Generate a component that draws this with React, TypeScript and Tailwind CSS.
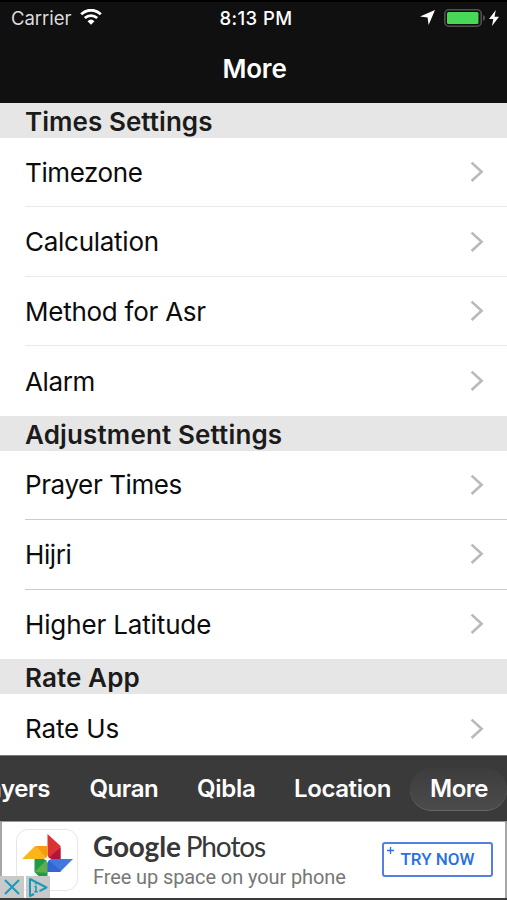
import React from "react";
import clsx from "clsx";

type Item = { label: string; text: string };

type SectionProps = {
  title: string;
  titleClass: string;
  divider: string;
  items: Item[];
};

const StatusBar: React.FC = () => {
  return (
    <div className="grid grid-cols-3 items-center h-9 pt-0.5 pl-[11px] pr-[8px] text-white">
      <div className="flex items-center gap-[9px]">
        <span className="text-[18.5px] tracking-[-0.05px] text-[#dddddd]">Carrier</span>
        <svg className="w-[22px] h-4 -mt-1" viewBox="0 0 22 16" fill="none">
          <path d="M1.2 5.2C6.8 -.1 15.2 -.1 20.8 5.2" stroke="#fff" strokeWidth="2.9" />
          <path d="M4.8 9C8.4 5.7 13.6 5.7 17.2 9" stroke="#fff" strokeWidth="2.8" />
          <path d="M11 15.7L7.5 12.2Q11 9 14.5 12.2Z" fill="#fff" />
        </svg>
      </div>
      <div className="pl-[2px] text-center text-[18.5px] font-medium tracking-[0.4px] whitespace-nowrap">
        8:13 PM
      </div>
      <div className="flex items-center justify-end -mt-[3px]">
        <svg className="w-[15px] h-[15px] mr-[9px]" viewBox="0 0 15 15">
          <path d="M15 0L8.6 15L7.6 7.5L0 6.5Z" fill="#fff" />
        </svg>
        <svg className="w-[42px] h-[18px] mr-[3px]" viewBox="0 0 42 18">
          <rect x=".8" y=".8" width="36.4" height="16.4" rx="4" fill="none" stroke="#505050" strokeWidth="1.6" />
          <rect x="3" y="3" width="31.5" height="12" rx="1.5" fill="#47d857" />
          <path d="M39 6Q41.2 7 41.2 9Q41.2 11 39 12Z" fill="#505050" />
        </svg>
        <svg className="w-[10px] h-4" viewBox="0 0 10 16">
          <path d="M6.8 0L0 9H4.3L3 16L10 6.8H5.5Z" fill="#fff" />
        </svg>
      </div>
    </div>
  );
};

const Section: React.FC<SectionProps> = (props) => {
  return (
    <section>
      <h2 className="flex items-center h-[34.75px] pt-[3px] pl-[25px] bg-[#e6e6e6] text-[26px] leading-none font-semibold text-[#1b1b1b]">
        <span className={props.titleClass}>{props.title}</span>
      </h2>
      <ul className="pl-[25px]">
        {props.items.map((item, i) => (
          <li
            key={item.label}
            className={clsx(
              "flex items-center justify-between h-[69.5px] pr-[23px]",
              i < props.items.length - 1 && "border-b",
              props.divider,
            )}
          >
            <span className={clsx("pt-px text-[26px] leading-none text-[#0c0c0c]", item.text)}>
              {item.label}
            </span>
            <svg className="w-[14px] h-[22px]" viewBox="0 0 14 22" fill="none">
              <path d="M1.6 1.6L11.6 10.8L1.6 20" stroke="#b9b9bb" strokeWidth="2.6" />
            </svg>
          </li>
        ))}
      </ul>
    </section>
  );
};

const TabBar: React.FC = () => {
  return (
    <nav className="flex items-center h-[66px] shrink-0 border-t border-[#777] bg-[#3a3a3a] text-[24px] font-semibold text-white overflow-hidden">
      <div className="flex justify-end w-[50px] shrink-0 tracking-[-0.4px]">Prayers</div>
      <div className="w-[68px] ml-[39.5px] shrink-0 tracking-[-0.45px]">Quran</div>
      <div className="w-[58px] ml-[39.5px] shrink-0 tracking-[-0.3px]">Qibla</div>
      <div className="w-[97px] ml-[39px] shrink-0 tracking-[-0.4px]">Location</div>
      <div className="flex items-center justify-center w-[97px] h-[43px] mt-px ml-[19px] pl-px shrink-0 rounded-full border-b border-[#686868] bg-linear-to-b from-[#3d3d3d] to-[#4b4b4b] tracking-[-0.5px]">
        More
      </div>
    </nav>
  );
};

const PhotosIcon: React.FC = () => {
  return (
    <svg className="w-[51px] h-[51px]" viewBox="0 0 51 51">
      <path d="M25.5 0L38.5 12V25H25.5Z" fill="#db3236" />
      <path d="M25.5 25L38.5 13.5V25Z" fill="#b5123e" />
      <path d="M0 25L13 12H25.5V25Z" fill="#fbb51a" />
      <path d="M14 12H25.5V25Z" fill="#f59b12" />
      <path d="M12.5 25H25.5V51L12.5 38Z" fill="#23994a" />
      <path d="M25.5 25V39L12.5 38Z" fill="#5db045" />
      <path d="M25.5 25H51L38 38H25.5Z" fill="#3f79e0" />
      <path d="M25.5 25L39 37L38 38H25.5Z" fill="#3465d3" />
      <path d="M25.5 21L26.7 23.8L29.5 25L26.7 26.2L25.5 29L24.3 26.2L21.5 25L24.3 23.8Z" fill="#fff" />
    </svg>
  );
};

const AdBanner: React.FC = () => {
  return (
    <div className="relative flex items-center h-[79px] shrink-0 border-t border-b-2 border-t-[#999] border-b-[#3a3a3a] bg-white font-['Roboto',sans-serif]">
      <div className="w-[2px] h-full bg-[#a6a6a6]" />
      <div className="flex items-center justify-center w-[62px] h-[62px] ml-[14px] -mt-px rounded-[12px] border border-[#e6e6e6]">
        <PhotosIcon />
      </div>
      <div className="w-[260px] ml-[15px]">
        <div className="flex gap-[5px] h-[30px] font-['Lato',sans-serif] text-[28px] leading-[30px] text-[#383838]">
          <span className="font-bold tracking-[-0.2px]">Google</span>
          <span className="tracking-[-1.1px]">Photos</span>
        </div>
        <div className="h-[28px] text-[20px] leading-[32px] tracking-[-0.1px] text-[#777] whitespace-nowrap">
          Free up space on your phone
        </div>
      </div>
      <div className="relative flex items-center justify-center w-[111px] h-[35px] -mt-px ml-[29px] rounded-[3px] border-2 border-[#5580e2] text-[17px] font-medium text-[#2671e5]">
        TRY NOW
        <svg className="absolute left-[3px] top-[3px] w-[7px] h-[7px]" viewBox="0 0 7 7">
          <path d="M3.5 0V7M0 3.5H7" stroke="#2671e5" strokeWidth="1.3" />
        </svg>
      </div>
      <div className="absolute right-0 top-0 w-[2px] h-full bg-[#a6a6a6]" />
      <div className="absolute left-0 bottom-0 flex gap-[2px] h-[22px]">
        <div className="flex items-center justify-center w-6 bg-[#c9c9c9]">
          <svg className="w-[16px] h-[16px]" viewBox="0 0 16 16">
            <path d="M1 1L15 15M15 1L1 15" stroke="#189bb8" strokeWidth="2" />
          </svg>
        </div>
        <div className="flex items-center justify-center w-6 bg-[#c9c9c9]">
          <svg className="w-[20px] h-[19px]" viewBox="0 0 20 19" fill="none">
            <path d="M6 16L2 18V1L18.5 9.5L11.5 13.2" stroke="#189bb8" strokeWidth="2" strokeLinejoin="round" />
            <path d="M8 5V6.6M6.3 8.5H8V13.8M6.3 13.8H9.8" stroke="#189bb8" strokeWidth="1.6" />
          </svg>
        </div>
      </div>
    </div>
  );
};

const App: React.FC = () => {
  return (
    <div className="flex flex-col w-[507px] h-[900px] overflow-hidden bg-white font-['Inter',sans-serif]">
      <header className="h-[103px] shrink-0 border-t-2 border-black bg-[#101010]">
        <div className="-mt-0.5">
          <StatusBar />
        </div>
        <h1 className="flex items-center justify-center h-[64px] pl-[2px] text-[26px] font-semibold tracking-[-0.2px] text-white">
          More
        </h1>
      </header>
      <main className="flex-1 min-h-0 overflow-hidden">
        <Section
          title="Times Settings"
          titleClass="tracking-[0.06px]"
          divider="border-[#e9e9e9]"
          items={[
            { label: "Timezone", text: "tracking-[-0.4px]" },
            { label: "Calculation", text: "tracking-[-0.27px]" },
            { label: "Method for Asr", text: "tracking-[-0.25px]" },
            { label: "Alarm", text: "tracking-[-0.4px]" },
          ]}
        />
        <Section
          title="Adjustment Settings"
          titleClass="tracking-[0.15px]"
          divider="border-[#cccccc]"
          items={[
            { label: "Prayer Times", text: "tracking-[-0.4px]" },
            { label: "Hijri", text: "tracking-[-0.4px]" },
            { label: "Higher Latitude", text: "tracking-[-0.14px]" },
          ]}
        />
        <Section
          title="Rate App"
          titleClass="tracking-[0.1px]"
          divider="border-[#cccccc]"
          items={[{ label: "Rate Us", text: "tracking-[-0.12px]" }]}
        />
      </main>
      <TabBar />
      <AdBanner />
    </div>
  );
};

export default App;
